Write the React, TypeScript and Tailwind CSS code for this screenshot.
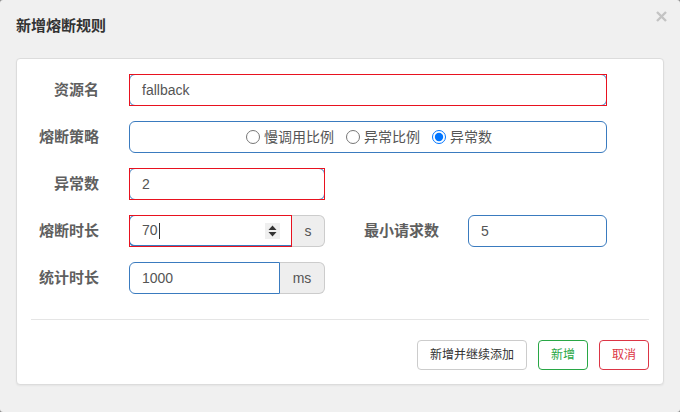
import React from "react";

const font = { fontFamily: '"Liberation Sans", "Noto Sans CJK SC", sans-serif' };

function Label({ children, w = "w-[68px]" }: { children: React.ReactNode; w?: string }) {
  return (
    <div className={`${w} shrink-0 text-right text-[15px] font-bold text-[#5f5f5f] leading-[32px]`}>{children}</div>
  );
}

function RedBox() {
  return <div className="pointer-events-none absolute inset-0 border border-[#e8121f]" />;
}

export default function App() {
  return (
    <div className="h-[412px] w-[680px] bg-[#8a8a8a]" style={font}>
      <div className="relative h-[412px] w-[680px] rounded-[3px] bg-[#f0f0f0]">
        <div className="absolute right-[13px] top-[11px]">
          <svg width="11" height="11" viewBox="0 0 11 11">
            <path d="M1 1 L10 10 M10 1 L1 10" stroke="#c4c4c4" strokeWidth="2.4" strokeLinecap="butt" />
          </svg>
        </div>
        <div className="h-[58px] px-4 pt-[17px]">
          <div className="text-[15px] font-bold leading-[18px] text-[#333]">新增熔断规则</div>
        </div>
        <div className="mx-4 h-[327px] rounded-[4px] border border-[#dcdcdc] bg-white px-[14px] pt-[15px] shadow-[0_1px_2px_rgba(0,0,0,0.05)]">
          <div className="flex flex-col gap-[15px]">
            <div className="flex h-[32px] items-center">
              <Label>资源名</Label>
              <div className="relative ml-[30px] h-[32px] w-[478px]">
                <div className="flex h-full items-center rounded-[6px] border border-[#3a7bbf] px-[12px] text-[14px] text-[#555]">fallback</div>
                <RedBox />
              </div>
            </div>
            <div className="flex h-[32px] items-center">
              <Label>熔断策略</Label>
              <div className="ml-[30px] flex h-[32px] w-[478px] items-center justify-center gap-[12px] rounded-[6px] border border-[#3a7bbf] pl-[2px] text-[14px] text-[#555]">
                <label className="flex items-center gap-[4px]">
                  <input type="radio" name="s" className="m-0 h-[14px] w-[14px]" />
                  慢调用比例
                </label>
                <label className="flex items-center gap-[4px]">
                  <input type="radio" name="s" className="m-0 h-[14px] w-[14px]" />
                  异常比例
                </label>
                <label className="flex items-center gap-[4px]">
                  <input type="radio" name="s" defaultChecked className="m-0 h-[14px] w-[14px]" />
                  异常数
                </label>
              </div>
            </div>
            <div className="flex h-[32px] items-center">
              <Label>异常数</Label>
              <div className="relative ml-[30px] h-[32px] w-[196px]">
                <div className="flex h-full items-center rounded-[6px] border border-[#3a7bbf] px-[12px] text-[14px] text-[#555]">2</div>
                <RedBox />
              </div>
            </div>
            <div className="flex h-[32px] items-center">
              <Label>熔断时长</Label>
              <div className="ml-[30px] flex h-[32px] w-[196px]">
                <div className="relative h-[32px] w-[163px]">
                  <div className="flex h-full items-center justify-between rounded-l-[6px] border border-b-2 border-[#3a7bbf] pl-[12px] pr-[11px] text-[14px] text-[#555]">
                    <span className="flex items-center">
                      70<span className="ml-[1px] inline-block h-[16px] w-px bg-[#333]" />
                    </span>
                    <span className="flex h-[16px] w-[15px] items-center justify-center bg-[#efefef]">
                      <svg width="9" height="12" viewBox="0 0 9 12">
                        <path d="M4.5 0.5 L8.5 5 L0.5 5 Z" fill="#333" />
                        <path d="M0.5 7 L8.5 7 L4.5 11.5 Z" fill="#333" />
                      </svg>
                    </span>
                  </div>
                  <RedBox />
                </div>
                <div className="flex h-[32px] w-[33px] items-center justify-center rounded-r-[6px] border border-l-0 border-[#ccc] bg-[#eee] text-[14px] text-[#555]">s</div>
              </div>
              <Label w="w-[114px]">最小请求数</Label>
              <div className="ml-[29px] flex h-[32px] w-[139px] items-center rounded-[6px] border border-[#3a7bbf] px-[12px] text-[14px] text-[#555]">5</div>
            </div>
            <div className="flex h-[32px] items-center">
              <Label>统计时长</Label>
              <div className="ml-[30px] flex h-[32px] w-[196px]">
                <div className="flex h-[32px] w-[151px] items-center rounded-l-[6px] border border-[#3a7bbf] px-[12px] text-[14px] text-[#555]">1000</div>
                <div className="flex h-[32px] w-[45px] items-center justify-center rounded-r-[6px] border border-l-0 border-[#ccc] bg-[#eee] text-[14px] text-[#555]">ms</div>
              </div>
            </div>
          </div>
          <div className="mt-[25px] border-t border-[#e5e5e5]" />
          <div className="mt-[20px] flex justify-end gap-[11px]">
            <button className="h-[30px] rounded-[4px] border border-[#ccc] bg-white px-[12px] text-[12px] text-[#333]">新增并继续添加</button>
            <button className="h-[30px] rounded-[4px] border border-[#28a745] bg-white px-[12px] text-[12px] text-[#28a745]">新增</button>
            <button className="h-[30px] rounded-[4px] border border-[#dc3545] bg-white px-[12px] text-[12px] text-[#dc3545]">取消</button>
          </div>
        </div>
      </div>
    </div>
  );
}
